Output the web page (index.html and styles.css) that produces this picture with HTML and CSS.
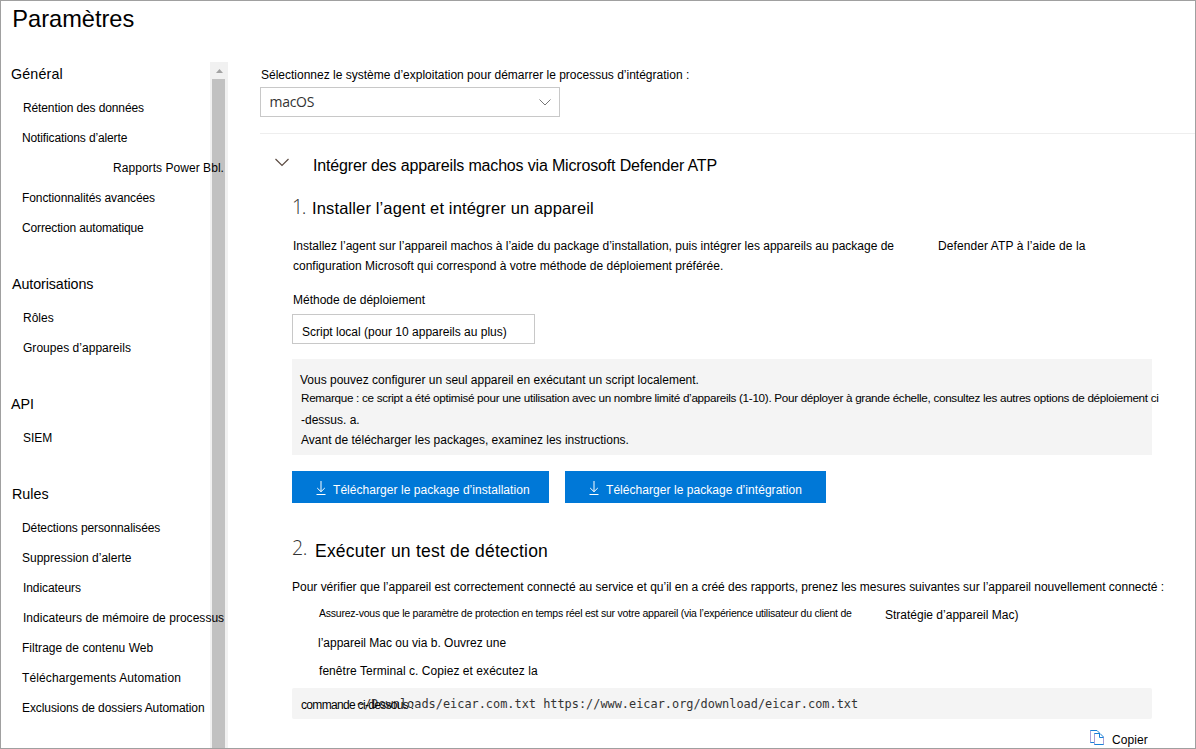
FILE: index.html
```html
<!DOCTYPE html>
<html lang="fr">
<head>
<meta charset="utf-8">
<title>Paramètres</title>
<link rel="stylesheet" href="styles.css">
</head>
<body>
<div class="frame">
  <h1 class="page-title">Paramètres</h1>
  <div class="layout">
    <div class="sidebar">
      <nav class="nav">
        <section class="group">
          <h2 class="g-general">Général</h2>
          <a class="n1 in">Rétention des données</a>
          <a class="n2">Notifications d’alerte</a>
          <a class="n3 power">Rapports Power Bbl.</a>
          <a class="n4">Fonctionnalités avancées</a>
          <a class="n5">Correction automatique</a>
        </section>
        <section class="group">
          <h2 class="g-auth">Autorisations</h2>
          <a class="n6 in">Rôles</a>
          <a class="n7 in">Groupes d’appareils</a>
        </section>
        <section class="group">
          <h2 class="g-api">API</h2>
          <a class="n8 in">SIEM</a>
        </section>
        <section class="group">
          <h2 class="g-rules">Rules</h2>
          <a class="n9">Détections personnalisées</a>
          <a class="n10">Suppression d’alerte</a>
          <a class="n11 in">Indicateurs</a>
          <a class="n12 in">Indicateurs de mémoire de processus</a>
          <a class="n13">Filtrage de contenu Web</a>
          <a class="n14">Téléchargements Automation</a>
          <a class="n15">Exclusions de dossiers Automation</a>
        </section>
      </nav>
      <div class="scrollbar">
        <svg class="scroll-up" width="7" height="4" viewBox="0 0 7 4"><path d="M3.5 0 7 4H0z" fill="#a3a3a3"/></svg>
        <div class="thumb"></div>
      </div>
    </div>
    <main class="main">
      <label class="os-label">Sélectionnez le système d’exploitation pour démarrer le processus d’intégration :</label>
      <div class="select">
        <span>macOS</span>
        <svg width="12" height="7" viewBox="0 0 12 7"><path d="M.5.5 6 6 11.500.5" fill="none" stroke="#777"/></svg>
      </div>
      <div class="panel">
        <div class="panel-head">
          <svg width="14" height="9" viewBox="0 0 14 9"><path d="M.5 1 7 7.500 13.500 1" fill="none" stroke="#5c4b42" stroke-width="1.2"/></svg>
          <h2 class="panel-title">Intégrer des appareils machos via Microsoft Defender ATP</h2>
        </div>
        <div class="content">
          <div class="step step-one"><span class="num">1.</span><h3>Installer l’agent et intégrer un appareil</h3></div>
          <div class="intro">
            <div class="intro-text">
              <p class="p1">Installez l’agent sur l’appareil machos à l’aide du package d’installation, puis intégrer les appareils au package de</p>
              <p class="p2">configuration Microsoft qui correspond à votre méthode de déploiement préférée.</p>
            </div>
            <p class="p3">Defender ATP à l’aide de la</p>
          </div>
          <label class="method-label">Méthode de déploiement</label>
          <div class="method"><span>Script local (pour 10 appareils au plus)</span></div>
          <div class="note">
            <p class="q1">Vous pouvez configurer un seul appareil en exécutant un script localement.</p>
            <p class="q2">Remarque : ce script a été optimisé pour une utilisation avec un nombre limité d’appareils (1-10). Pour déployer à grande échelle, consultez les autres options de déploiement ci</p>
            <p class="q3">-dessus. a.</p>
            <p class="q4">Avant de télécharger les packages, examinez les instructions.</p>
          </div>
          <div class="buttons">
            <button class="btn install">
              <svg width="10" height="14" viewBox="0 0 10 14"><path d="M5 0v10.500M1.200 7 5 10.700 8.800 7M.5 13.500h9" fill="none" stroke="#fff"/></svg>
              <span>Télécharger le package d’installation</span>
            </button>
            <button class="btn onboard">
              <svg width="10" height="14" viewBox="0 0 10 14"><path d="M5 0v10.500M1.200 7 5 10.700 8.800 7M.5 13.500h9" fill="none" stroke="#fff"/></svg>
              <span>Télécharger le package d’intégration</span>
            </button>
          </div>
          <div class="step step-two"><span class="num">2.</span><h3>Exécuter un test de détection</h3></div>
          <p class="verify">Pour vérifier que l’appareil est correctement connecté au service et qu’il en a créé des rapports, prenez les mesures suivantes sur l’appareil nouvellement connecté :</p>
          <div class="tasks">
            <div class="task-row"><p class="t1">Assurez-vous que le paramètre de protection en temps réel est sur votre appareil (via l’expérience utilisateur du client de</p><p class="t2">Stratégie d’appareil Mac)</p></div>
            <p class="t3">l’appareil Mac ou via b. Ouvrez une</p>
            <p class="t4">fenêtre Terminal c. Copiez et exécutez la</p>
          </div>
          <div class="command">
            <code>~/Downloads/eicar.com.txt https://www.eicar.org/download/eicar.com.txt</code>
            <span class="caption">commande ci-dessous :</span>
          </div>
          <div class="copy">
            <svg width="14" height="15" viewBox="0 0 14 15" fill="none"><path d="M4 12.500H.5V.5h6.500l2.500 2.500" stroke="#1a80d8"/><path d="M.5 1v11" stroke="#aaa0d8"/><path d="M4.500 3.500h5.500l3.500 3.500v7.500h-9z" fill="#fff" stroke="#1a80d8"/><path d="M4.500 4v10M13.500 7v7" stroke="#aaa0d8"/><path d="M9.500 3.500v4h4" stroke="#1a80d8"/></svg>
            <span>Copier</span>
          </div>
        </div>
      </div>
    </main>
  </div>
</div>
</body>
</html>
```
FILE: styles.css
```css
* { box-sizing: border-box; }
body, h1, h2, h3, p { margin: 0; font-weight: 400; }
body {
  background: #fff;
  color: #000;
  font: 12px/20px "Liberation Sans", Arial, sans-serif;
}
svg { display: block; flex: none; }
p, h1, h2, h3, label, span, a { white-space: nowrap; }

.frame {
  width: 1196px;
  height: 749px;
  border: 1px solid #a0a0a0;
  overflow: hidden;
}
.page-title { height: 60px; padding-left: 11.300px; font-size: 23.600px; line-height: 37px; }
.layout { display: flex; }

.sidebar { display: flex; width: 227px; height: 688px; }
.nav { width: 209px; flex: none; position: relative; z-index: 1; }
.group { display: flex; flex-direction: column; padding-bottom: 27px; }
.group:first-child { margin-top: -1px; }
.group h2 { height: 33px; padding-left: 10px; font-size: 14.300px; line-height: 28px; }
.group .g-general { letter-spacing: .15px; }
.group .g-auth { padding-left: 11px; letter-spacing: -.1px; }
.group .g-rules { padding-left: 11px; }
.group a { height: 30px; padding-left: 21px; line-height: 30px; }
.group .in { padding-left: 22px; }
.group .power { padding-left: 112px; }
.n1 { letter-spacing: -.12px; }
.n2 { letter-spacing: -.13px; }
.n3 { letter-spacing: .05px; }
.n4 { letter-spacing: -.1px; }
.n5 { letter-spacing: -.14px; }
.n7, .n12, .n13 { letter-spacing: .03px; }
.n9 { letter-spacing: -.1px; }
.n11 { letter-spacing: -.08px; }
.n14 { letter-spacing: .11px; }
.n15 { letter-spacing: -.09px; }

.scrollbar {
  display: flex;
  flex-direction: column;
  align-items: center;
  width: 18px;
  margin-top: 1px;
  background: #f1f1f1;
}
.scroll-up { margin: 7px 0 6px; }
.thumb { width: 13px; flex: 1; margin-right: 1px; background: #c1c1c1; }

.main { flex: 1; min-width: 0; padding-left: 32px; }
.os-label { display: block; height: 26px; padding: 4px 0 0 1px; }
.select {
  display: flex;
  align-items: center;
  justify-content: space-between;
  width: 300px;
  height: 30px;
  padding: 0 8px;
  border: 1px solid #c8c8c8;
  font: 14px "Open Sans", sans-serif;
  letter-spacing: -.3px;
  color: #333;
}
.select span { margin: -2px 0 0 .5px; }
.panel { margin-top: 16px; border-top: 1px solid #eee; }
.panel-head { display: flex; height: 63px; padding: 24px 0 0 15px; gap: 24px; }
.panel-title { font-size: 16px; line-height: 16px; letter-spacing: -.165px; }
.content { padding-left: 32px; }

.step { display: flex; line-height: 20px; }
.num { width: 20px; font: 300 19.500px/20px "Open Sans", sans-serif; letter-spacing: -.5px; color: #333; }
.step-one { height: 39px; }
.step-one .num { letter-spacing: -1.500px; }
.step-one h3 { padding-top: 1px; font-size: 16.500px; letter-spacing: .14px; }
.step-two { height: 37px; margin-top: 37px; }
.step-two .num { width: 23px; margin-top: -2px; }
.step-two h3 { padding-top: 1px; font-size: 17.500px; letter-spacing: .22px; }
.intro { display: flex; }
.intro-text { width: 646px; padding-left: 1px; }
.p3 { letter-spacing: .09px; }
.method-label { display: block; height: 24px; margin: 14px 0 0 1px; }
.method {
  width: 243px;
  height: 30px;
  padding: 7px 0 0 9px;
  border: 1px solid #c8c8c8;
}
.note { width: 860px; height: 96px; margin-top: 15px; padding: 11px 8px; background: #f4f4f4; }
.q2 { height: 20px; padding-left: 1px; font-size: 11.700px; line-height: 16px; letter-spacing: -.305px; }
.q3, .q4 { padding-left: 1px; }

.buttons { display: flex; gap: 16px; margin-top: 16px; }
.btn {
  display: flex;
  gap: 7px;
  height: 32px;
  padding: 9px 0 0 24px;
  border: 0;
  background: #0078d7;
  color: #fff;
  font: 12px/20px "Liberation Sans", Arial, sans-serif;
  letter-spacing: .05px;
}
.btn svg { margin-top: 1px; }
.install { width: 257px; }
.onboard { width: 261px; }

.verify { height: 27px; letter-spacing: -.01px; }
.tasks { padding-left: 27px; }
.task-row { display: flex; height: 29px; }
.t1 { width: 566px; font-size: 10.500px; line-height: 19px; letter-spacing: -.225px; }
.t2 { line-height: 22px; }
.t3 { height: 28px; margin-left: -1px; }
.t4 { height: 27px; letter-spacing: .05px; }
.command {
  position: relative;
  width: 860px;
  height: 31px;
  padding: 6px 0 0 65px;
  border-radius: 2px;
  background: #f4f4f4;
}
.command code { display: block; font: 11.900px/20px "DejaVu Sans Mono", monospace; color: #333; }
.caption { position: absolute; left: 9px; top: 7px; letter-spacing: -.68px; }
.copy { display: flex; gap: 8px; margin-top: 11px; padding-left: 798px; letter-spacing: .1px; }
```
